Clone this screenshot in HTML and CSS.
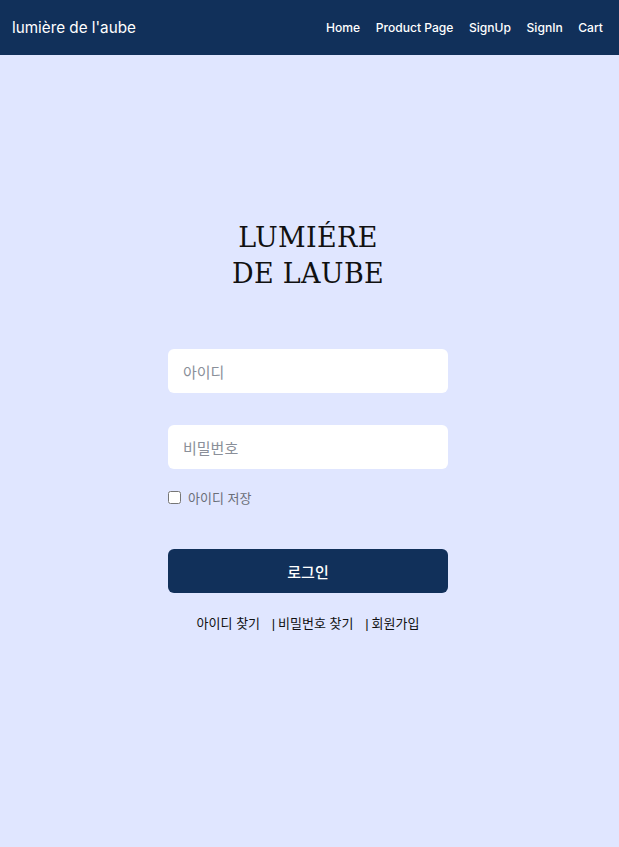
FILE: index.html
```html
<!DOCTYPE html>
<html lang="ko">
<head>
<meta charset="utf-8">
<title>lumière de l'aube</title>
<link rel="stylesheet" href="styles.css">
</head>
<body>
<header class="topbar">
  <a class="brand" href="#">lumière de l'aube</a>
  <nav class="nav">
    <a href="#">Home</a>
    <a href="#">Product Page</a>
    <a href="#">SignUp</a>
    <a href="#">SignIn</a>
    <a href="#">Cart</a>
  </nav>
</header>
<main class="main">
  <h1 class="title">LUMIÉRE<br>DE LAUBE</h1>
  <form class="form">
    <input class="field" type="text" placeholder="아이디">
    <input class="field field-pw" type="password" placeholder="비밀번호">
    <label class="remember"><input type="checkbox" class="check"> 아이디 저장</label>
    <button type="button" class="submit">로그인</button>
    <div class="links">
      <a href="#">아이디 찾기</a>
      <span class="sep">|</span><a href="#">비밀번호 찾기</a>
      <span class="sep">|</span><a href="#">회원가입</a>
    </div>
  </form>
</main>
</body>
</html>
```
FILE: styles.css
```css
* { box-sizing: border-box; }
html, body { margin: 0; padding: 0; }
body {
  background: #e0e6ff;
  font-family: "Liberation Sans", "Noto Sans CJK KR", sans-serif;
  min-height: 847px;
}
.topbar {
  height: 55px;
  background: #11305a;
  display: flex;
  align-items: center;
  justify-content: space-between;
  padding: 0 16px 0 12px;
}
.brand {
  color: #fff;
  text-decoration: none;
  font-family: Inter, Roboto, sans-serif;
  font-size: 15.25px;
}
.nav { display: flex; gap: 15.5px; }
.nav a {
  color: #fff;
  text-decoration: none;
  font-family: Inter, Roboto, sans-serif;
  font-size: 12.1px;
  font-weight: 500;
}
.main {
  display: flex;
  flex-direction: column;
  align-items: center;
  padding: 165px 3px 0 0;
}
.title {
  margin: 0;
  font-family: "DejaVu Serif", serif;
  font-weight: normal;
  font-size: 27px;
  line-height: 36px;
  text-align: center;
  color: #111;
  letter-spacing: 0.3px;
}
.form {
  width: 280px;
  margin-top: 57px;
  display: flex;
  flex-direction: column;
}
.field {
  height: 44px;
  border: none;
  border-radius: 6px;
  background: #fff;
  padding: 0 15px;
  font-family: "Noto Sans CJK KR", sans-serif;
  font-size: 15px;
  outline: none;
}
.field::placeholder { color: #8a8f99; }
.field-pw { margin-top: 32px; }
.remember {
  margin-top: 19px;
  display: flex;
  align-items: center;
  gap: 7px;
  font-family: "Noto Sans CJK KR", sans-serif;
  font-size: 13px;
  color: #6b6f78;
  height: 18px;
}
.check { margin: 0; width: 13px; height: 13px; }
.submit {
  margin-top: 43px;
  height: 44px;
  border: none;
  border-radius: 6px;
  background: #11305a;
  color: #fff;
  font-family: "Noto Sans CJK KR", sans-serif;
  font-size: 15px;
  font-weight: 500;
}
.links {
  margin-top: 20px;
  text-align: center;
  font-family: "Noto Sans CJK KR", sans-serif;
  font-size: 13px;
  color: #111;
}
.links a { color: #111; text-decoration: none; }
.sep { color: #111; font-family: "Liberation Sans", sans-serif; margin: 0 3px 0 8px; }
```
